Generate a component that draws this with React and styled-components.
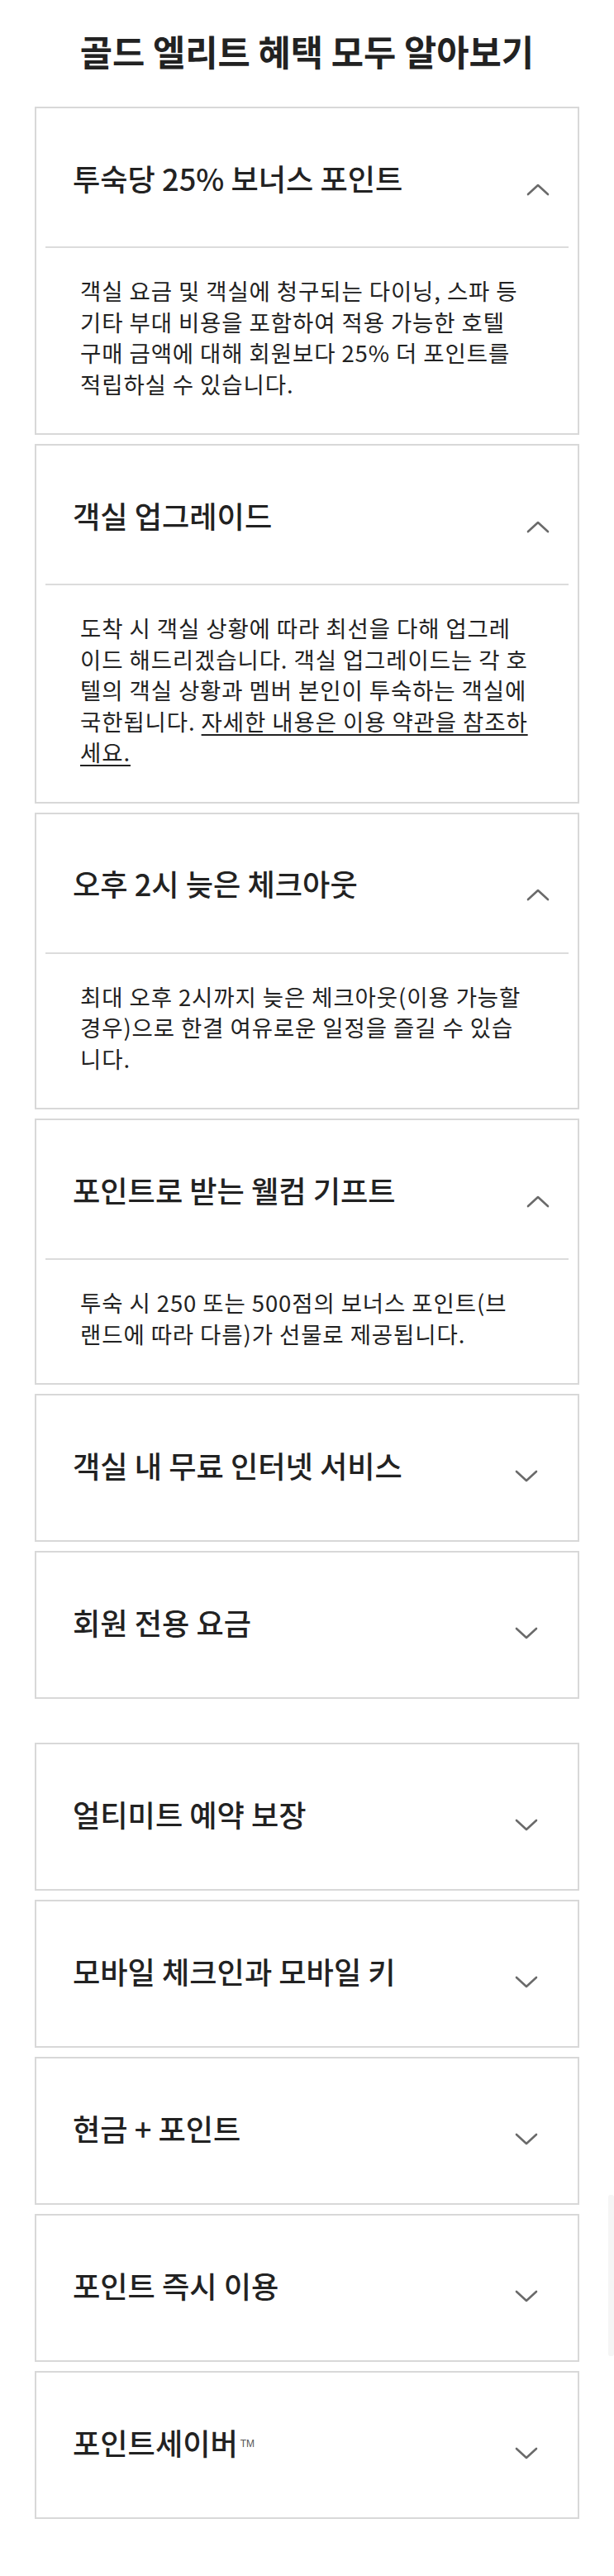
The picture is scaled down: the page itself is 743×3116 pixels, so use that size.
import React, { useState } from "react";
import styled, { createGlobalStyle } from "styled-components";

const GlobalStyle = createGlobalStyle`
  html, body {
    margin: 0;
    padding: 0;
    background: #ffffff;
  }
  body {
    font-family: "Noto Sans CJK KR", "Noto Sans", sans-serif;
    color: #222222;
  }
`;

// body copy is kept in the same lines as the source layout
const topGroup = [
  {
    title: "투숙당 25% 보너스 포인트",
    lines: [
      ["객실 요금 및 객실에 청구되는 다이닝, 스파 등"],
      ["기타 부대 비용을 포함하여 적용 가능한 호텔"],
      ["구매 금액에 대해 회원보다 25% 더 포인트를"],
      ["적립하실 수 있습니다."],
    ],
  },
  {
    title: "객실 업그레이드",
    lines: [
      ["도착 시 객실 상황에 따라 최선을 다해 업그레"],
      ["이드 해드리겠습니다. 객실 업그레이드는 각 호"],
      ["텔의 객실 상황과 멤버 본인이 투숙하는 객실에"],
      ["국한됩니다. ", { link: "자세한 내용은 이용 약관을 참조하" }],
      [{ link: "세요." }],
    ],
  },
  {
    title: "오후 2시 늦은 체크아웃",
    lines: [
      ["최대 오후 2시까지 늦은 체크아웃(이용 가능할"],
      ["경우)으로 한결 여유로운 일정을 즐길 수 있습"],
      ["니다."],
    ],
  },
  {
    title: "포인트로 받는 웰컴 기프트",
    lines: [
      ["투숙 시 250 또는 500점의 보너스 포인트(브"],
      ["랜드에 따라 다름)가 선물로 제공됩니다."],
    ],
  },
  { title: "객실 내 무료 인터넷 서비스" },
  { title: "회원 전용 요금" },
];

const bottomGroup = [
  { title: "얼티미트 예약 보장" },
  { title: "모바일 체크인과 모바일 키" },
  { title: "현금 + 포인트" },
  { title: "포인트 즉시 이용" },
  { title: "포인트세이버", tm: true },
];

const Chevron = ({ open }) => (
  <ChevronBox $open={open}>
    <svg width="28" height="16" viewBox="0 0 28 16" fill="none">
      <path
        d={open ? "M2 14 L14 3 L26 14" : "M2 2 L14 13 L26 2"}
        stroke="#6a6a6a"
        strokeWidth="2.6"
        strokeLinecap="round"
        strokeLinejoin="round"
      />
    </svg>
  </ChevronBox>
);

const Item = ({ item, initialOpen }) => {
  const [open, setOpen] = useState(initialOpen);
  const hasBody = Boolean(item.lines);

  return (
    <Card $collapsed={!open}>
      <Header onClick={() => hasBody && setOpen(!open)}>
        <ItemTitle>
          {item.title}
          {item.tm && <Tm>TM</Tm>}
        </ItemTitle>
        <Chevron open={open} />
      </Header>
      {open && hasBody && (
        <>
          <Divider />
          <Body>
            {item.lines.map((line, i) => (
              <Line key={i}>
                {line.map((part, j) =>
                  typeof part === "string" ? (
                    part
                  ) : (
                    <Link key={j} href="#">
                      {part.link}
                    </Link>
                  )
                )}
              </Line>
            ))}
          </Body>
        </>
      )}
    </Card>
  );
};

const App = () => {
  return (
    <>
      <GlobalStyle />
      <Page>
        <Heading>골드 엘리트 혜택 모두 알아보기</Heading>
        <Group>
          {topGroup.map((item) => (
            <Item key={item.title} item={item} initialOpen={Boolean(item.lines)} />
          ))}
        </Group>
        <Group>
          {bottomGroup.map((item) => (
            <Item key={item.title} item={item} initialOpen={false} />
          ))}
        </Group>
        <ScrollThumb />
      </Page>
    </>
  );
};

export default App;

const Page = styled.div`
  position: relative;
  min-height: 3116px;
  box-sizing: border-box;
  padding: 37px 42px 68px;
  background: #ffffff;
`;

const Heading = styled.h1`
  margin: 0 0 44px;
  font-size: 42.7px;
  line-height: 48px;
  font-weight: 700;
  text-align: center;
  color: #222222;
`;

const Group = styled.div`
  display: flex;
  flex-direction: column;
  gap: 11px;

  & + & {
    margin-top: 53px;
  }
`;

const Card = styled.div`
  border: 2px solid #d8d8d8;
  background: #ffffff;
  padding-bottom: ${(p) => (p.$collapsed ? "8px" : "0")};
`;

const Header = styled.div`
  height: 167px;
  display: flex;
  align-items: center;
  justify-content: space-between;
  padding: 0 0 0 44px;
  cursor: pointer;
`;

const ItemTitle = styled.span`
  font-size: 36.2px;
  font-weight: 500;
  color: #222222;
  line-height: 42px;
`;

const Tm = styled.sup`
  font-family: "Liberation Sans", sans-serif;
  font-size: 12px;
  font-weight: 400;
  color: #555555;
  vertical-align: top;
  position: relative;
  top: 2px;
  margin-left: 3px;
`;

const ChevronBox = styled.span`
  display: flex;
  margin-top: 28px;
  margin-right: ${(p) => (p.$open ? "34px" : "48px")};
`;

const Divider = styled.div`
  height: 2px;
  margin: 0 11px;
  background: #dcdcdc;
`;

const Body = styled.div`
  padding: 33px 40px 41px 53px;
  font-size: 27.5px;
  letter-spacing: 0.9px;
  line-height: 37.5px;
  font-weight: 400;
  color: #222222;
`;

const Line = styled.span`
  display: block;
  white-space: nowrap;
`;

const Link = styled.a`
  color: #222222;
  text-decoration: underline;
  text-decoration-thickness: 2px;
  text-underline-offset: 4px;
`;

const ScrollThumb = styled.div`
  position: absolute;
  right: 0;
  top: 2655px;
  width: 7px;
  height: 195px;
  border-radius: 3px;
  background: #f5f5f5;
`;
